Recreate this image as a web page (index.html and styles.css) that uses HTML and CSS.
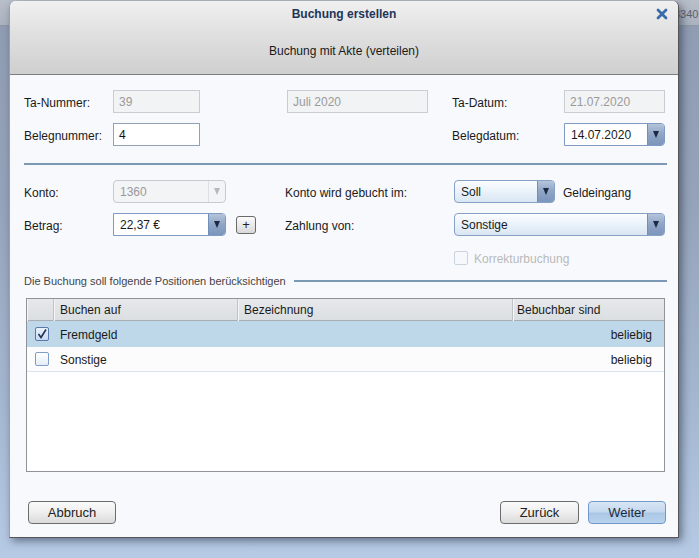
FILE: index.html
```html
<!DOCTYPE html>
<html lang="de">
<head>
<meta charset="utf-8">
<title>Buchung erstellen</title>
<link rel="stylesheet" href="styles.css">
</head>
<body>
<div class="page">
  <div class="topbar"><span class="bgtext">3340</span></div>
</div>

<div class="dialog">
  <div class="dlg-head">
    <div class="title">Buchung erstellen</div>
    <div class="close">
      <svg width="12" height="12" viewBox="0 0 12 12"><path d="M2 2 L10 10 M10 2 L2 10" stroke="#3a6aac" stroke-width="2.8" stroke-linecap="round"/></svg>
    </div>
    <div class="subtitle">Buchung mit Akte (verteilen)</div>
  </div>

  <div class="dlg-body">
    <div class="grid1">
      <div class="lbl">Ta-Nummer:</div>
      <div class="field disabled">39</div>
      <div></div>
      <div class="field disabled">Juli 2020</div>
      <div></div>
      <div class="lbl">Ta-Datum:</div>
      <div class="field disabled">21.07.2020</div>

      <div class="lbl">Belegnummer:</div>
      <div class="field edit">4</div>
      <div></div>
      <div></div>
      <div></div>
      <div class="lbl">Belegdatum:</div>
      <div class="combo edit"><span class="val">14.07.2020</span><span class="btn"><i class="arrow"></i></span></div>
    </div>

    <div class="sep"></div>

    <div class="grid2">
      <div class="lbl">Konto:</div>
      <div class="combo dis"><span class="val">1360</span><span class="btn"><i class="arrow"></i></span></div>
      <div></div>
      <div></div>
      <div></div>
      <div class="lbl">Konto wird gebucht im:</div>
      <div class="with-note">
        <div class="combo sel short"><span class="val">Soll</span><span class="btn"><i class="arrow"></i></span></div>
        <span class="note">Geldeingang</span>
      </div>

      <div class="lbl">Betrag:</div>
      <div class="combo edit"><span class="val">22,37 €</span><span class="btn"><i class="arrow"></i></span></div>
      <div></div>
      <div class="plus">+</div>
      <div></div>
      <div class="lbl">Zahlung von:</div>
      <div class="combo sel"><span class="val">Sonstige</span><span class="btn"><i class="arrow"></i></span></div>

      <div></div><div></div><div></div><div></div><div></div><div></div>
      <div class="check-line"><span class="cb cb-dis"></span><span class="dis-text">Korrekturbuchung</span></div>
    </div>

    <div class="group-title"><span>Die Buchung soll folgende Positionen berücksichtigen</span><span class="gline"></span></div>

    <div class="table">
      <div class="trow thead">
        <div class="c0"></div>
        <div class="c1">Buchen auf</div>
        <div class="c2">Bezeichnung</div>
        <div class="c3">Bebuchbar sind</div>
      </div>
      <div class="trow tr selected">
        <div class="c0"><span class="cb cb-on"><svg width="12" height="12" viewBox="0 0 12 12"><path d="M2.5 6 L5 9.5 L10 1.5" fill="none" stroke="#1f3358" stroke-width="1.6"/></svg></span></div>
        <div class="c1">Fremdgeld</div>
        <div class="c2"></div>
        <div class="c3 right">beliebig</div>
      </div>
      <div class="trow tr plain">
        <div class="c0"><span class="cb cb-off"></span></div>
        <div class="c1">Sonstige</div>
        <div class="c2"></div>
        <div class="c3 right">beliebig</div>
      </div>
    </div>

    <div class="footer">
      <button class="b b-abbruch">Abbruch</button>
      <div class="footer-right">
        <button class="b b-zurueck">Zurück</button>
        <button class="b b-weiter">Weiter</button>
      </div>
    </div>
  </div>
</div>
</body>
</html>
```

FILE: styles.css
```css
html, body {
  margin: 0;
  padding: 0;
}
body {
  width: 699px;
  height: 558px;
  overflow: hidden;
  position: relative;
  font-family: "Liberation Sans", Arial, sans-serif;
  font-size: 12px;
  color: #1a1a1a;
  background: linear-gradient(180deg, #8f9bb1 0px, #95a3ba 200px, #a6b8d2 420px, #b7cae5 558px);
}
.page {
  height: 558px;
}
.topbar {
  height: 25px;
  background: linear-gradient(180deg, #b9bfc9, #aab2bf);
  border-bottom: 1px solid #8d97a6;
  position: relative;
}
.bgtext {
  position: absolute;
  left: 674px;
  top: 8px;
  font-size: 11px;
  color: #5a6272;
}

.dialog {
  position: absolute;
  left: 9px;
  top: 1px;
  width: 668px;
  height: 536px;
  border-left: 1px solid #9aa0a8;
  border-right: 1px solid #555;
  border-bottom: 1px solid #555;
  border-radius: 6px 6px 0 0;
  background: #f8f9fd;
  box-shadow: 3px 3px 9px rgba(30, 40, 60, 0.55);
  display: flex;
  flex-direction: column;
}

.dlg-head {
  height: 67px;
  padding-top: 6px;
  border-bottom: 1px solid #7c7c7c;
  border-radius: 6px 6px 0 0;
  background: linear-gradient(180deg, #f0f0f0 0%, #e0e0e0 45%, #cfcfcf 100%);
  display: flex;
  flex-direction: column;
  align-items: center;
  position: relative;
}
.title {
  font-family: "Liberation Sans Narrow", "Arial Narrow", "Liberation Sans", sans-serif;
  font-weight: bold;
  font-size: 12px;
  line-height: 14px;
  color: #1e3556;
}
.subtitle {
  font-family: "Liberation Sans Narrow", "Arial Narrow", "Liberation Sans", sans-serif;
  font-size: 12px;
  line-height: 14px;
  margin-top: 23px;
  color: #1a1a1a;
}
.close {
  position: absolute;
  right: 10px;
  top: 7px;
  width: 12px;
  height: 12px;
}
.close svg { display: block; }

.dlg-body {
  padding: 15px 12px 0 14px;
  display: flex;
  flex-direction: column;
}

.grid1 {
  display: grid;
  grid-template-columns: 89px 87px 87px 141px 24px 112px 101px;
  grid-template-rows: 23px 23px;
  row-gap: 10px;
  align-items: center;
}
.grid2 {
  display: grid;
  grid-template-columns: 89px 113px 10px 20px 29px 169px 211px;
  grid-template-rows: 23px 23px 23px;
  row-gap: 10px;
  align-items: center;
}
.lbl {
  white-space: nowrap;
  color: #1a1a1a;
  padding-top: 2px;
}

.field {
  height: 21px;
  line-height: 22px;
  padding-left: 5px;
  box-sizing: content-box;
}
.field.disabled {
  background: #f2f3f5;
  border: 1px solid #c9ccd0;
  color: #9a9a9a;
}
.field.edit {
  background: #fff;
  border: 1px solid #8fa2b8;
  color: #111;
}

.combo {
  height: 21px;
  display: flex;
  align-items: stretch;
  border-radius: 4px;
  overflow: hidden;
}
.combo .val {
  flex: 1;
  line-height: 22px;
  padding-left: 6px;
  white-space: nowrap;
}
.combo .btn {
  width: 16px;
  display: flex;
  align-items: center;
  justify-content: center;
}
.arrow {
  display: block;
  width: 0;
  height: 0;
  border-left: 3.5px solid transparent;
  border-right: 3.5px solid transparent;
  border-top: 7px solid #1b2a42;
}
.combo.edit {
  border: 1px solid #7f9bc2;
  background: #fff;
  border-radius: 0 4px 4px 0;
}
.combo.edit .btn,
.combo.sel .btn {
  border-left: 1px solid #6f8fbd;
  background: linear-gradient(180deg, #b4c4da 0%, #8fa5c6 50%, #7c95bb 100%);
}
.combo.sel {
  border: 1px solid #86a0c6;
  background: linear-gradient(180deg, #fbfdff 0%, #eaf2fa 50%, #d9e6f3 100%);
}
.combo.sel.short {
  width: 99px;
}
.combo.dis {
  border: 1px solid #c7cbd1;
  background: #f3f4f6;
  color: #9a9a9a;
}
.combo.dis .btn {
  border-left: 1px solid #dcdfe3;
}
.combo.dis .arrow {
  border-top-color: #b5b8bd;
}

.with-note {
  display: flex;
  align-items: center;
}
.note {
  margin-left: 8px;
  white-space: nowrap;
  padding-top: 2px;
}

.plus {
  width: 18px;
  height: 16px;
  border: 1px solid #6a6a6a;
  border-radius: 3px;
  background: linear-gradient(180deg, #fbfbfb, #d9d9d9);
  display: flex;
  align-items: center;
  justify-content: center;
  font-size: 13px;
  line-height: 16px;
  color: #222;
}

.check-line {
  display: flex;
  align-items: center;
}
.cb {
  display: inline-flex;
  align-items: center;
  justify-content: center;
  width: 12px;
  height: 12px;
  border-radius: 2px;
  box-sizing: content-box;
}
.cb-dis {
  border: 1px solid #c9d3df;
  background: #f6f8fb;
}
.dis-text {
  margin-left: 6px;
  color: #b9b9b9;
  padding-top: 2px;
}

.sep {
  margin-top: 17px;
  height: 2px;
  background: #7b98b5;
  margin-right: -1px;
}
.grid2 { margin-top: 15px; }

.group-title {
  margin-top: 5px;
  display: flex;
  align-items: center;
  font-size: 11px;
  line-height: 14px;
  color: #444;
  margin-right: -1px;
}
.gline {
  flex: 1;
  height: 2px;
  background: #7b98b5;
  margin-left: 8px;
}

.table {
  margin-top: 10px;
  margin-left: 2px;
  width: 637px;
  height: 172px;
  border: 1px solid #909498;
  background: #fff;
}
.trow {
  display: grid;
  grid-template-columns: 27px 184px 275px 1fr;
}
.thead {
  height: 21px;
  background: linear-gradient(180deg, #e6e8eb, #dcdfe2);
  border-bottom: 1px solid #a9adb2;
}
.thead > div {
  border-right: 1px solid #bfc3c8;
  box-shadow: inset 1px 0 0 #f4f5f6;
  line-height: 22px;
  padding-left: 6px;
  color: #1a1a1a;
}
.thead > div:last-child {
  border-right: none;
  padding-left: 4px;
}
.tr > div {
  display: flex;
  align-items: center;
}
.tr .c1 { padding-left: 6px; padding-top: 1px; }
.tr .c0 { justify-content: center; padding-left: 2px; }
.tr .right { justify-content: flex-end; padding-right: 12px; padding-top: 1px; }
.selected {
  height: 26px;
  background: #bed8ea;
}
.plain {
  height: 24px;
  background: #fcfcfc;
  border-bottom: 1px solid #d6e4f1;
}
.cb-on {
  border: 1px solid #5a78a8;
  background: linear-gradient(180deg, #e9f1fb, #c7d9ef);
}
.cb-off {
  border: 1px solid #7f9dc6;
  background: linear-gradient(180deg, #ffffff, #e6eef8);
}
.cb svg { display: block; }

.footer {
  margin-top: 29px;
  display: flex;
  justify-content: space-between;
  padding-left: 4px;
}
.footer-right {
  display: flex;
  gap: 9px;
}
.b {
  height: 23px;
  font-family: "Liberation Sans", Arial, sans-serif;
  font-size: 13px;
  color: #222;
  border: 1px solid #6d6d6d;
  border-radius: 4px;
  background: linear-gradient(180deg, #fafafa 0%, #eeeeee 50%, #dadada 100%);
  padding: 0;
  margin: 0;
}
.b-abbruch { width: 88px; }
.b-zurueck { width: 79px; }
.b-weiter {
  width: 78px;
  border-color: #7098c8;
  background: linear-gradient(180deg, #d8e6f5 0%, #c3d7ee 48%, #a9c7e5 52%, #b9d3ee 100%);
  color: #1c2a3c;
}
```
